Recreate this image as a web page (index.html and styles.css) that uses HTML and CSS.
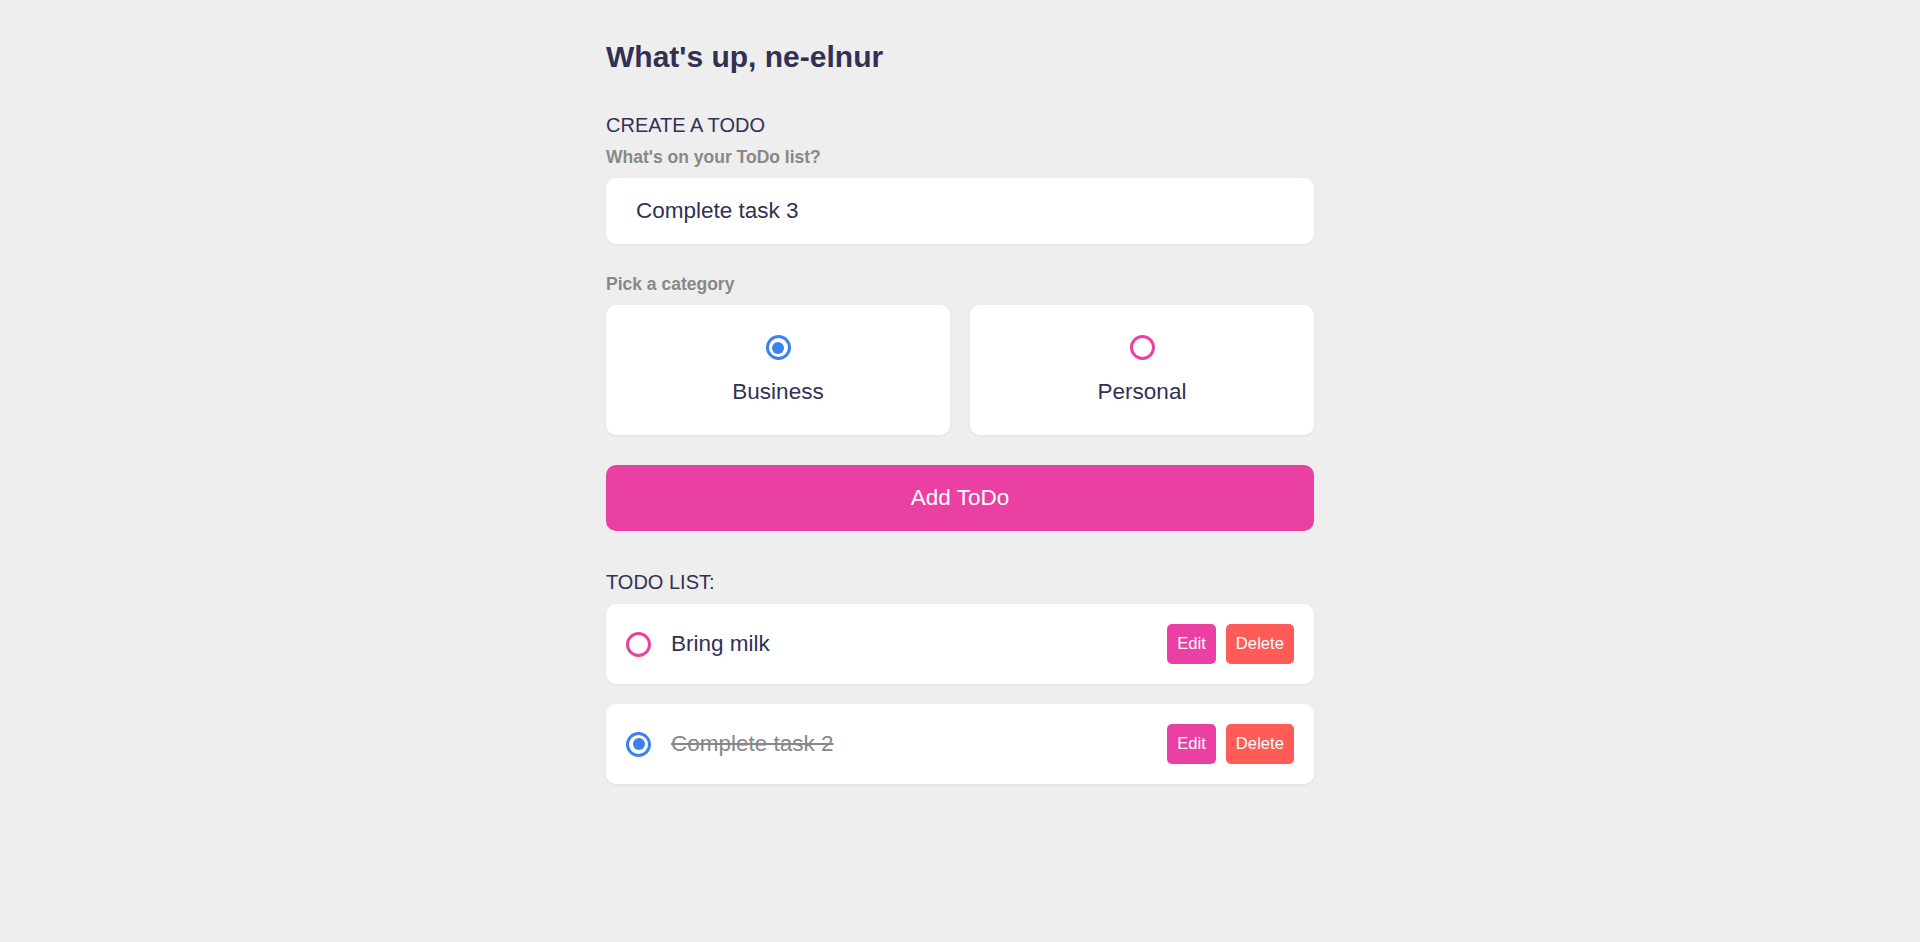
FILE: index.html
```html
<!DOCTYPE html>
<html lang="en">
<head>
<meta charset="utf-8">
<title>ToDo</title>
<link rel="stylesheet" href="styles.css">
</head>
<body>
<main class="app">
  <section class="greeting">
    <h2 class="title">What's up, ne-elnur</h2>
  </section>

  <section class="create-todo">
    <h3>CREATE A TODO</h3>
    <form class="create-form">
      <h4>What's on your ToDo list?</h4>
      <div class="text-input">Complete task 3</div>

      <h4>Pick a category</h4>
      <div class="options">
        <label class="option">
          <span class="bubble business checked"></span>
          <div class="option-name">Business</div>
        </label>
        <label class="option">
          <span class="bubble personal"></span>
          <div class="option-name">Personal</div>
        </label>
      </div>

      <button type="button" class="submit">Add ToDo</button>
    </form>
  </section>

  <section class="todo-list">
    <h3>TODO LIST:</h3>
    <div class="list">
      <div class="todo-item">
        <span class="bubble personal"></span>
        <div class="todo-content">Bring milk</div>
        <div class="actions">
          <button type="button" class="edit">Edit</button>
          <button type="button" class="delete">Delete</button>
        </div>
      </div>
      <div class="todo-item done">
        <span class="bubble business checked"></span>
        <div class="todo-content">Complete task 2</div>
        <div class="actions">
          <button type="button" class="edit">Edit</button>
          <button type="button" class="delete">Delete</button>
        </div>
      </div>
    </div>
  </section>
</main>
</body>
</html>
```

FILE: styles.css
```css
* {
  margin: 0;
  padding: 0;
  box-sizing: border-box;
  font-family: "Liberation Sans", Arial, sans-serif;
}

body {
  background: #eeeeee;
  color: #313154;
}

.app {
  max-width: 768px;
  margin: 0 auto;
}

section {
  margin-top: 40px;
  margin-bottom: 40px;
  padding-left: 30px;
  padding-right: 30px;
}

h3 {
  color: #313154;
  font-size: 20px;
  font-weight: 400;
  margin-bottom: 10px;
}

h4 {
  color: #888888;
  font-size: 17.5px;
  font-weight: 700;
  margin-bottom: 10px;
}

.greeting .title {
  color: #313154;
  font-size: 30px;
  font-weight: 700;
}

.text-input {
  width: 100%;
  font-size: 22.5px;
  line-height: 26px;
  padding: 20px 30px;
  color: #313154;
  background: #ffffff;
  border-radius: 10px;
  box-shadow: 0 1px 3px rgba(0, 0, 0, 0.06);
  margin-bottom: 30px;
}

.options {
  display: grid;
  grid-template-columns: repeat(2, 1fr);
  gap: 20px;
  margin-bottom: 30px;
  margin-top: 1px;
}

.option {
  display: flex;
  flex-direction: column;
  align-items: center;
  justify-content: center;
  background: #ffffff;
  padding: 30px 30px 30px;
  border-radius: 10px;
  box-shadow: 0 1px 3px rgba(0, 0, 0, 0.06);
}

.option-name {
  color: #313154;
  font-size: 22.5px;
  line-height: 26px;
  margin-top: 19px;
}

.bubble {
  display: flex;
  align-items: center;
  justify-content: center;
  width: 25px;
  height: 25px;
  border-radius: 50%;
  border: 3px solid #3a82ee;
  flex: none;
}

.bubble.personal {
  border-color: #ea40a4;
}

.bubble.checked::after {
  content: "";
  display: block;
  width: 12px;
  height: 12px;
  border-radius: 50%;
  background: #3a82ee;
}

.submit {
  display: block;
  width: 100%;
  border: none;
  font-size: 22.5px;
  line-height: 26px;
  padding: 20px 30px;
  color: #ffffff;
  background: #ea40a4;
  border-radius: 10px;
}

.todo-item {
  display: flex;
  align-items: center;
  background: #ffffff;
  padding: 20px;
  border-radius: 10px;
  box-shadow: 0 1px 3px rgba(0, 0, 0, 0.06);
  margin-bottom: 20px;
}

.todo-item .bubble {
  margin-right: 20px;
}

.todo-content {
  flex: 1 1 0%;
  color: #313154;
  font-size: 22.5px;
  line-height: 26px;
}

.todo-item.done .todo-content {
  color: #888888;
  text-decoration: line-through;
}

.actions {
  display: flex;
  align-items: center;
  gap: 10px;
}

.actions button {
  display: block;
  border: none;
  padding: 10px;
  border-radius: 5px;
  color: #ffffff;
  font-size: 16.67px;
  line-height: 20px;
}

.actions .edit {
  background: #ea40a4;
}

.actions .delete {
  background: #ff5b57;
}
```
